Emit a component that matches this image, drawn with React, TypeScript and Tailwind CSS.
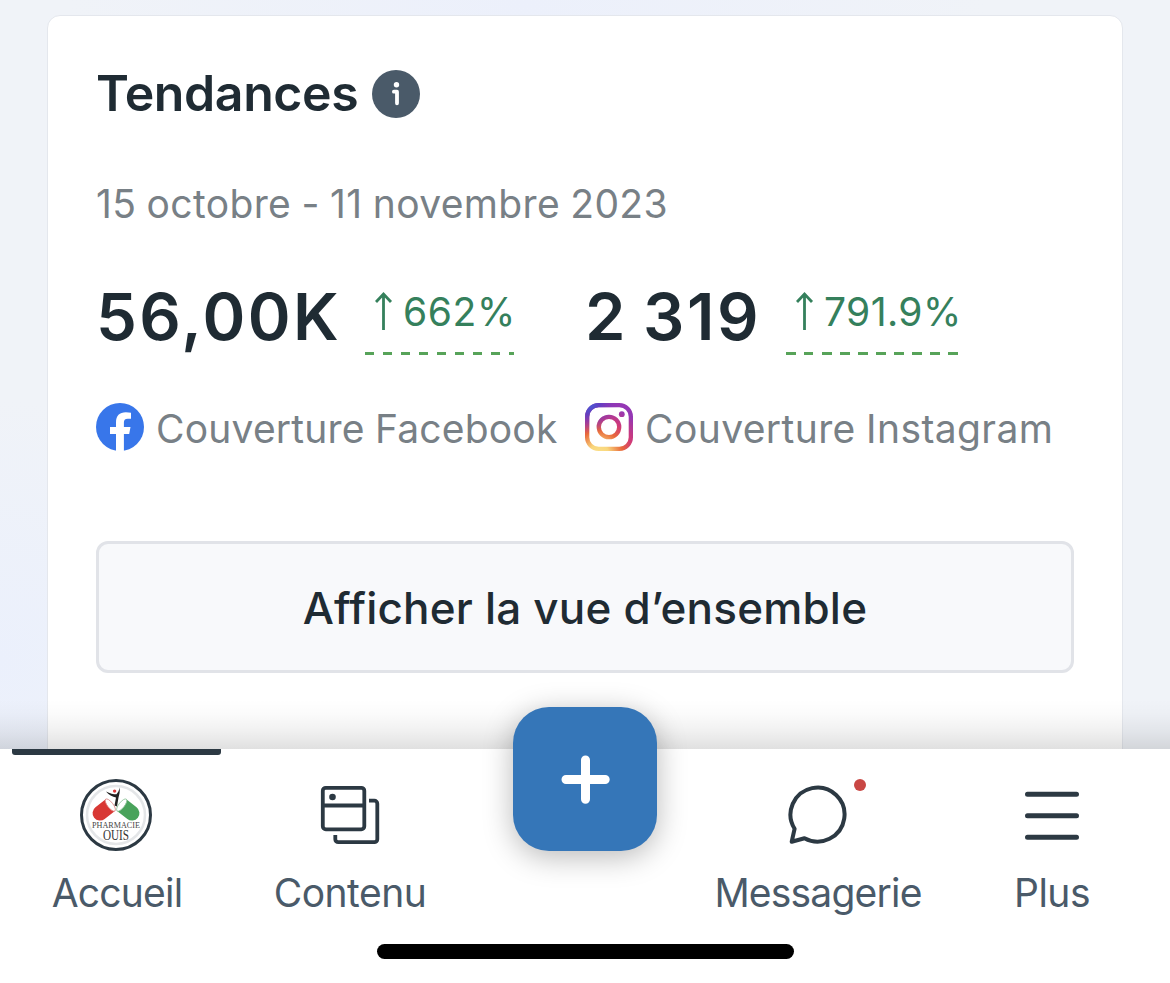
import React from "react";

const sans = "font-['Inter','Noto_Sans',sans-serif]";

function InfoIcon() {
  return (
    <svg width="48" height="48" viewBox="0 0 48 48" className="shrink-0">
      <circle cx="24" cy="24" r="24" fill="#4a5a69" />
      <circle cx="24.5" cy="14.7" r="2.7" fill="#fff" />
      <path d="M21.9 21.700h3.100v11.600" fill="none" stroke="#fff" strokeWidth="3.8" strokeLinecap="round" strokeLinejoin="round" />
    </svg>
  );
}

function FacebookIcon() {
  return (
    <svg width="48" height="48" viewBox="0 0 48 48" className="shrink-0">
      <circle cx="24" cy="24" r="24" fill="#3876ea" />
      <path d="M20 48V31h-6v-7h6v-4.6c0-6.8 3.5-10.2 9.8-10.2 2 0 3.6.2 5.2.5v6h-3.200c-3 0-3.900 1.500-3.900 3.800V24H34.500l-1.300 7H27.900v17z" fill="#fff" />
    </svg>
  );
}

function InstagramIcon() {
  return (
    <svg width="48" height="48" viewBox="0 0 48 48" className="shrink-0">
      <defs>
        <radialGradient id="warm" gradientUnits="userSpaceOnUse" cx="14" cy="51" r="49">
          <stop offset="0" stopColor="#fbe08a" />
          <stop offset="0.2" stopColor="#f9d67c" />
          <stop offset="0.48" stopColor="#e8683a" />
          <stop offset="0.7" stopColor="#d03a78" />
          <stop offset="1" stopColor="#9437b4" />
        </radialGradient>
        <radialGradient id="cool" gradientUnits="userSpaceOnUse" cx="4" cy="0" r="30" gradientTransform="rotate(12)">
          <stop offset="0" stopColor="#4560d8" />
          <stop offset="0.35" stopColor="#5b3fc4" stopOpacity="0.9" />
          <stop offset="1" stopColor="#8a35b8" stopOpacity="0" />
        </radialGradient>
      </defs>
      {["url(#warm)", "url(#cool)"].map((paint) => (
        <g key={paint}>
          <rect x="2.150" y="2.150" width="43.700" height="43.700" rx="11.500" fill="none" stroke={paint} strokeWidth="4.300" />
          <circle cx="24" cy="24" r="10.200" fill="none" stroke={paint} strokeWidth="4.300" />
          <circle cx="36.800" cy="11.200" r="2.900" fill={paint} />
        </g>
      ))}
    </svg>
  );
}

function Trend({ value, width, tracking }: { value: string; width: string; tracking: string }) {
  return (
    <div className={`flex h-[75px] flex-col justify-between ${width}`}>
      <div className="flex h-[62px] items-center pl-[10px]">
        <svg width="18" height="40" viewBox="0 0 18 40" className="shrink-0" fill="none" stroke="#35805c" strokeWidth="2.800">
          <path d="M8.500 39V3M1 11l7.500-8 7.500 8" />
        </svg>
        <span className={`pt-px pl-[10px] whitespace-nowrap text-[39px] leading-[48px] text-[#35805c] ${tracking}`}>{value}</span>
      </div>
      <div className="h-[3px] bg-[repeating-linear-gradient(90deg,#57a359_0_9.500px,transparent_9.500px_18px)]" />
    </div>
  );
}

function PharmacyAvatar() {
  return (
    <svg width="72" height="72" viewBox="0 0 72 72">
      <circle cx="36" cy="36" r="34.500" fill="#fff" stroke="#2c3943" strokeWidth="3" />
      <circle cx="36" cy="36" r="29" fill="#fff" stroke="#e4e6e8" strokeWidth="2.500" />
      <g transform="rotate(-38 24 31)">
        <path d="M32 23.500H19a7.500 7.500 0 0 0 0 15h13z" fill="#d83834" />
        <ellipse cx="32" cy="31" rx="2.800" ry="7.500" fill="#fff" stroke="#df8683" strokeWidth="0.800" />
      </g>
      <g transform="rotate(38 48 31)">
        <path d="M40 23.500h13a7.500 7.500 0 0 1 0 15H40z" fill="#49a35b" />
        <ellipse cx="40" cy="31" rx="2.800" ry="7.500" fill="#fff" stroke="#91c69c" strokeWidth="0.800" />
      </g>
      <path d="M39.500 8.500c.8 4-.2 7-1 10l-1.500 9-2.500-1 1.500-8c-3.500-1-7.500-2.500-10-6 4 2 7.500 2.800 10.500 2.800 1.500-2 2.500-3.500 3-6.800z" fill="#222" />
      <circle cx="34.600" cy="12.100" r="1.700" fill="#dc3838" />
      <text x="36" y="49.300" textAnchor="middle" fontFamily="Liberation Serif, serif" fontSize="9" textLength="48" lengthAdjust="spacingAndGlyphs" fill="#444">PHARMACIE</text>
      <text x="36" y="60.800" textAnchor="middle" fontFamily="Liberation Serif, serif" fontSize="14" textLength="26" lengthAdjust="spacingAndGlyphs" fill="#333">OUIS</text>
    </svg>
  );
}

function ContentIcon() {
  return (
    <svg width="60" height="60" viewBox="0 0 60 60" fill="none" stroke="#2c3943" strokeWidth="3.800">
      <rect x="2.800" y="2.800" width="41.500" height="41.500" rx="3" />
      <path d="M2.800 20.500h41.500M49 15.700h5.300a3 3 0 0 1 3 3v35.500a3 3 0 0 1-3 3h-36a3 3 0 0 1-3-3V50" />
      <circle cx="12.500" cy="12" r="3.300" fill="#2c3943" stroke="none" />
    </svg>
  );
}

function ChatIcon() {
  return (
    <svg width="60" height="60" viewBox="0 0 60 60" fill="none" stroke="#2c3943" strokeWidth="4" strokeLinejoin="round">
      <path d="M6.600 43.800A27 27 0 1 1 16.500 53.200L3.700 56.800z" />
    </svg>
  );
}

function MenuIcon() {
  return (
    <svg width="54" height="60" viewBox="0 0 54 60" stroke="#2c3943" strokeWidth="5" strokeLinecap="round">
      <path d="M2.500 9.200h49M2.500 30.700h49M2.500 52.200h49" />
    </svg>
  );
}

function NavItem({ icon, label, tracking, active, badge }: { icon: React.ReactNode; label: string; tracking: string; active?: boolean; badge?: boolean }) {
  return (
    <div className="flex w-[234px] flex-col items-center pr-[2px]">
      <div className={`h-[6px] w-[209px] rounded-b-[3px] ${active ? "bg-[#2c3943]" : ""}`} />
      <div className="relative mt-6 flex h-[72px] items-center">
        {icon}
        {badge && <span className="absolute top-0 -right-[18px] size-3 rounded-full bg-[#c94744]" />}
      </div>
      <div className={`mt-[18px] whitespace-nowrap text-[39px] leading-[48px] text-[#4a5a69] ${tracking} ${active ? "ml-[2px]" : ""}`}>{label}</div>
    </div>
  );
}

export default function App() {
  return (
    <div className={`flex h-[983px] w-[1170px] flex-col overflow-hidden bg-white ${sans}`}>
      <div className="relative h-[749px] bg-[#f0f3f8] bg-[radial-gradient(circle_at_0%_88%,#ebf0fc_0,transparent_260px),radial-gradient(circle_at_45%_0%,#ecf0fb_0,transparent_460px)] px-[47px] pt-[15px]">
        <main className="h-[760px] rounded-[13px] border border-[#e4e7ed] bg-white px-12 pt-[54px]">
          <div className="flex h-12 items-center gap-[14px]">
            <h1 className="w-[262px] whitespace-nowrap pb-[2px] text-[50px] leading-[60px] font-semibold tracking-[-0.4px] text-[#1f2b33]">Tendances</h1>
            <InfoIcon />
          </div>
          <p className="mt-[60px] whitespace-nowrap text-[39px] leading-[52px] tracking-[0.35px] [word-spacing:-1px] text-[#788086]">15 octobre - 11 novembre 2023</p>
          <div className="mt-[50px] flex">
            <section className="w-[489px]">
              <div className="flex">
                <strong className="-mt-px w-[269px] whitespace-nowrap text-[65px] leading-[76px] font-semibold tracking-[2.4px] text-[#1f2b33]">56,00K</strong>
                <Trend value="662%" width="w-[149px]" tracking="tracking-[0.6px]" />
              </div>
              <div className="mt-12 flex h-12 items-center gap-3">
                <FacebookIcon />
                <span className="pt-[3px] whitespace-nowrap text-[39px] leading-[48px] tracking-[0.2px] [word-spacing:-1px] text-[#788086]">Couverture Facebook</span>
              </div>
            </section>
            <section>
              <div className="flex">
                <strong className="-mt-px w-[201px] whitespace-nowrap text-[65px] leading-[76px] font-semibold tracking-[2.6px] [word-spacing:-4px] text-[#1f2b33]">2 319</strong>
                <Trend value="791.9%" width="w-[172px]" tracking="tracking-[0.4px]" />
              </div>
              <div className="mt-12 flex h-12 items-center gap-3">
                <InstagramIcon />
                <span className="pt-[3px] whitespace-nowrap text-[39px] leading-[48px] tracking-[0.4px] [word-spacing:-1px] text-[#788086]">Couverture Instagram</span>
              </div>
            </section>
          </div>
          <button className="mt-[90px] flex h-[132px] w-[978px] items-center justify-center rounded-[12px] border-[3px] border-[#e1e3e8] bg-[#f8f9fb] pt-[2px] whitespace-nowrap text-[44px] font-medium tracking-[0.2px] text-[#1f2b33]">
            Afficher la vue d’ensemble
          </button>
        </main>
        <div className="absolute inset-x-0 bottom-0 h-[50px] bg-[linear-gradient(to_top,rgba(0,0,0,.12),rgba(0,0,0,.06)_35%,rgba(0,0,0,.015)_70%,transparent)]" />
      </div>
      <nav className="relative flex h-[234px] bg-white">
        <NavItem icon={<PharmacyAvatar />} label="Accueil" tracking="tracking-[-0.8px]" active />
        <NavItem icon={<ContentIcon />} label="Contenu" tracking="tracking-[-0.5px]" />
        <div className="flex w-[234px] justify-center">
          <button className="-mt-[42px] flex size-36 items-center justify-center rounded-[36px] bg-[#3576b8] shadow-[0_6px_30px_rgba(0,0,0,0.28)]">
            <svg width="48" height="48" viewBox="0 0 48 48" className="overflow-visible" stroke="#fff" strokeWidth="9" strokeLinecap="round">
              <path d="M5 24.500h39.200M24.500 5v39.200" />
            </svg>
          </button>
        </div>
        <NavItem icon={<ChatIcon />} label="Messagerie" tracking="tracking-[-0.8px]" badge />
        <NavItem icon={<MenuIcon />} label="Plus" tracking="tracking-[-0.5px]" />
        <div className="absolute bottom-6 left-[377px] h-[15px] w-[417px] rounded-full bg-black" />
      </nav>
    </div>
  );
}
